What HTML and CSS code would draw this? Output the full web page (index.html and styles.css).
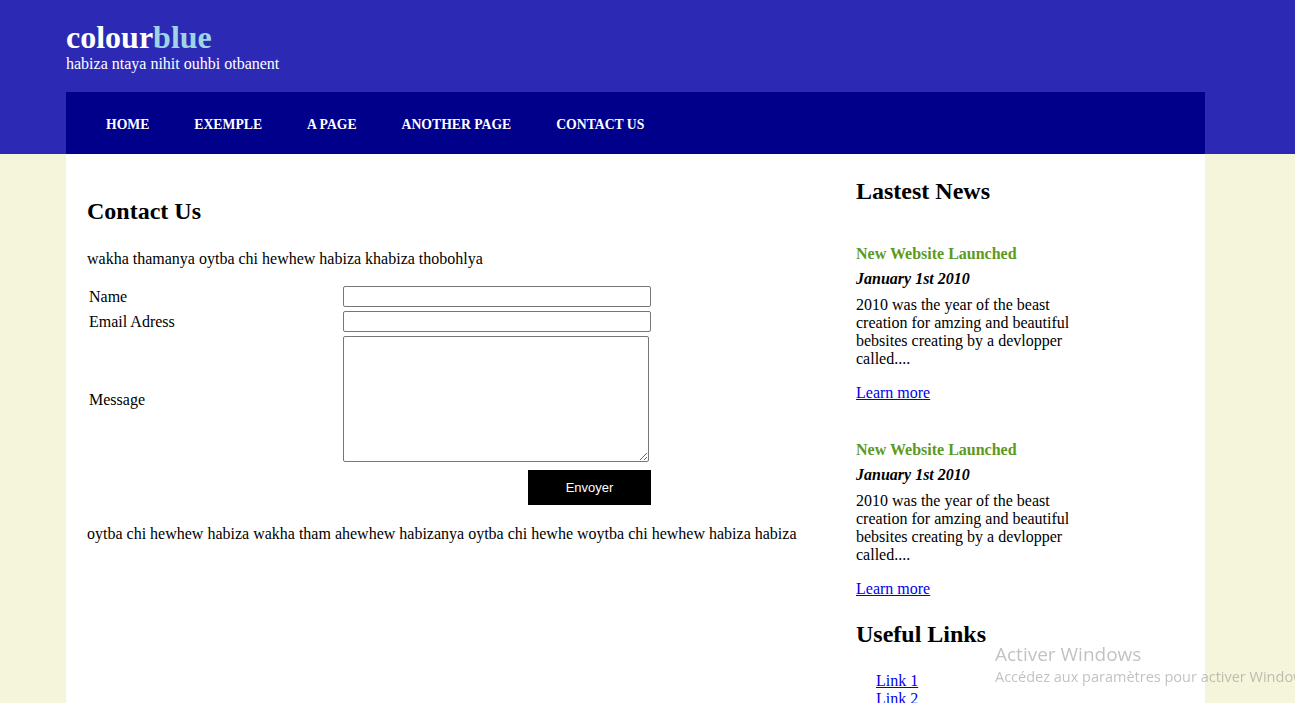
FILE: index.html
```html
<!DOCTYPE html>
<html lang="fr">
<head>
<meta charset="utf-8">
<title>colourblue</title>
<link rel="stylesheet" href="styles.css">
</head>
<body>
<header class="site-header">
  <div class="brand">
    <h1 class="logo"><span class="logo-a">colour</span><span class="logo-b">blue</span></h1>
    <p class="tagline">habiza ntaya nihit ouhbi otbanent</p>
  </div>
  <nav class="menu">
    <a href="#">HOME</a>
    <a href="#">EXEMPLE</a>
    <a href="#">A PAGE</a>
    <a href="#">ANOTHER PAGE</a>
    <a href="#">CONTACT US</a>
  </nav>
</header>
<div class="page">
  <main class="content">
    <h2 class="title">Contact Us</h2>
    <p class="intro">wakha thamanya oytba chi hewhew habiza khabiza thobohlya</p>
    <form class="contact">
      <table class="form-table">
        <tr>
          <td class="lbl">Name</td>
          <td><input class="field" type="text"></td>
        </tr>
        <tr>
          <td class="lbl">Email Adress</td>
          <td><input class="field" type="text"></td>
        </tr>
        <tr>
          <td class="lbl lbl-msg">Message</td>
          <td><textarea class="area"></textarea></td>
        </tr>
        <tr>
          <td></td>
          <td class="btn-cell"><button class="send" type="button">Envoyer</button></td>
        </tr>
      </table>
    </form>
    <p class="outro">oytba chi hewhew habiza wakha tham ahewhew habizanya oytba chi hewhe woytba chi hewhew habiza habiza</p>
  </main>
  <aside class="sidebar">
    <h2 class="side-title">Lastest News</h2>
    <div class="news">
      <h3 class="news-title">New Website Launched</h3>
      <h4 class="news-date">January 1st 2010</h4>
      <p class="news-text">2010 was the year of the beast creation for amzing and beautiful bebsites creating by a devlopper called....</p>
      <p class="news-more"><a href="#">Learn more</a></p>
    </div>
    <div class="news">
      <h3 class="news-title">New Website Launched</h3>
      <h4 class="news-date">January 1st 2010</h4>
      <p class="news-text">2010 was the year of the beast creation for amzing and beautiful bebsites creating by a devlopper called....</p>
      <p class="news-more"><a href="#">Learn more</a></p>
    </div>
    <h2 class="side-title links-title">Useful Links</h2>
    <ul class="links">
      <li><a href="#">Link 1</a></li>
      <li><a href="#">Link 2</a></li>
    </ul>
  </aside>
</div>
<div class="watermark">
  <div class="wm-1">Activer Windows</div>
  <div class="wm-2">Accédez aux paramètres pour activer Windows.</div>
</div>
</body>
</html>
```
FILE: styles.css
```css
html, body {
  margin: 0;
  padding: 0;
}
body {
  background: #f5f5dc;
  font-family: "Liberation Serif", "Times New Roman", serif;
  color: #000;
  overflow: hidden;
  height: 703px;
}
.site-header {
  background: #2c2ab4;
  padding-top: 20px;
}
.brand {
  margin-left: 66px;
  height: 72px;
}
.logo {
  margin: 0;
  font-size: 32px;
  line-height: 34px;
  font-weight: bold;
}
.logo-a { color: #ffffff; }
.logo-b { color: #9ed4e6; }
.tagline {
  margin: 0;
  color: #fff;
  font-size: 16px;
  line-height: 20px;
}
.menu {
  margin-left: 66px;
  width: 1139px;
  height: 62px;
  background: #00008b;
  display: flex;
  align-items: center;
  gap: 45px;
  padding: 3px 0 0 40px;
  box-sizing: border-box;
}
.menu a {
  color: #fff;
  text-decoration: none;
  font-size: 13.7px;
  font-weight: bold;
  line-height: 18px;
}
.page {
  margin-left: 66px;
  width: 1139px;
  min-height: 600px;
  background: #fff;
  display: flex;
}
.content {
  width: 769px;
  padding: 44px 0 0 21px;
  box-sizing: border-box;
}
.title {
  margin: 0;
  font-size: 24px;
  line-height: 26px;
}
.intro {
  margin: 25px 0 0;
  font-size: 16px;
  line-height: 19px;
}
.contact {
  margin: 15px 0 0 -1px;
}
.form-table {
  border-spacing: 2px;
  font-size: 16px;
}
.form-table td {
  padding: 1px;
  vertical-align: middle;
}
.lbl {
  width: 250px;
  line-height: 18px;
}
.form-table td.lbl-msg {
  vertical-align: top;
  padding-top: 56px;
}
.field {
  display: block;
  width: 308px;
  height: 21px;
  box-sizing: border-box;
  margin: 0;
  border: 1px solid #767676;
  border-radius: 2px;
  padding: 1px 2px;
}
.area {
  display: block;
  width: 306px;
  height: 126px;
  box-sizing: border-box;
  margin: 0;
  border: 1px solid #767676;
  border-radius: 2px;
  resize: both;
}
.btn-cell {
  text-align: right;
}
.send {
  margin-top: 4px;
  width: 123px;
  height: 35px;
  background: #000;
  color: #fff;
  border: none;
  font-family: "Liberation Sans", Arial, sans-serif;
  font-size: 13px;
  cursor: pointer;
}
.outro {
  margin: 17px 0 0;
  font-size: 16px;
  line-height: 18px;
}
.sidebar {
  padding: 24px 0 0 21px;
  width: 260px;
}
.side-title {
  margin: 0;
  font-size: 24px;
  line-height: 26px;
}
.news {
  width: 222px;
  padding-top: 40px;
}
.news + .news {
  padding-top: 38px;
}
.news-title {
  margin: 0;
  color: #5c9a1f;
  font-size: 16px;
  line-height: 20px;
}
.news-date {
  margin: 5px 0 0;
  font-size: 16px;
  font-style: italic;
  line-height: 20px;
}
.news-text {
  margin: 7px 0 0;
  font-size: 16px;
  line-height: 18px;
}
.news-more {
  margin: 16px 0 0;
  font-size: 16px;
  line-height: 18px;
}
.news-more a, .links a {
  color: #0000ee;
}
.links-title {
  margin-top: 23px;
}
.links {
  list-style: none;
  margin: 25px 0 0;
  padding-left: 20px;
  font-size: 16px;
  line-height: 18px;
}
.watermark {
  position: fixed;
  left: 995px;
  top: 642px;
  color: rgba(120, 120, 120, 0.45);
  font-family: "Open Sans", "Noto Sans", sans-serif;
  white-space: nowrap;
}
.wm-1 {
  font-size: 19px;
  line-height: 24px;
}
.wm-2 {
  font-size: 14.5px;
  line-height: 22px;
}
```
